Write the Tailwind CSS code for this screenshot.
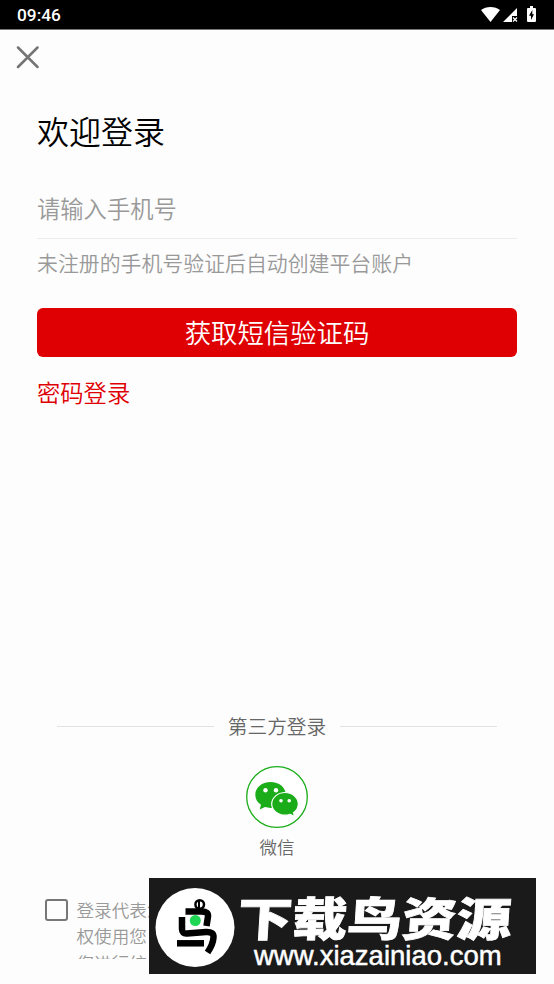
<!DOCTYPE html>
<html lang="zh-CN">
<head>
    <meta charset="UTF-8">
    <meta name="viewport" content="width=device-width, initial-scale=1.0">
    <title>欢迎登录</title>
    <script src="https://cdn.jsdelivr.net/npm/@tailwindcss/browser@4"></script>
</head>
<body class="bg-[#fdfdfd] font-['Noto_Sans_CJK_SC',sans-serif] font-[350] overflow-hidden">
    <div class="relative flex flex-col w-[554px] h-[984px] overflow-hidden">

        <!-- Status Bar -->
        <header class="flex justify-between h-[30px] pl-[17px] pr-[18px] bg-black border-b border-[#777] text-white shrink-0">
            <span class="font-['Roboto',sans-serif] font-medium text-[17.300px] leading-[31px]">09:46</span>
            <div class="flex pt-[6px]">
                <svg class="w-[20px] h-[17px]" viewBox="0 0 20 17" fill="#fff"><path d="M9.500 16 0 4Q4 1 9.500 1T19 4z"/></svg>
                <svg class="w-[15px] h-[17px] ml-[2px]" viewBox="0 0 15 17"><path d="M0 16 14 2v8H9v6z" fill="#fff"/><path d="m10 11.500 4 4m0-4-4 4" stroke="#fff" stroke-width="1.300"/></svg>
                <svg class="w-[9px] h-[17px] ml-[9px]" viewBox="0 0 9 17"><path d="M1 2h2V0h3v2h2q1 0 1 1v12q0 1-1 1H1q-1 0-1-1V3q0-1 1-1z" fill="#fff"/><path d="M5.300 4 2 9.700h2V14l3-5.700H5.300z" fill="#000"/></svg>
            </div>
        </header>

        <!-- Close Button -->
        <button class="mt-[16px] ml-[16px] w-[24px] h-[24px] shrink-0">
            <svg class="w-[24px] h-[24px]" viewBox="0 0 24 24" fill="none" stroke="#747474" stroke-width="2.500" stroke-linecap="round"><path d="m2 1.500 19.500 19.500M21.500 1.500 2 21"/></svg>
        </button>

        <!-- Login Form -->
        <main class="flex flex-col px-[37px]">
            <h1 class="mt-[37px] text-[32px] leading-[46px] font-[350] text-black">欢迎登录</h1>
            <div class="mt-[34px] h-[52px] pt-[4px] border-b border-[#ececec] text-[23.300px] leading-[34px] text-[#999]">请输入手机号</div>
            <p class="mt-[8px] text-[20.900px] leading-[30px] text-[#999]">未注册的手机号验证后自动创建平台账户</p>
            <button class="mt-[31px] h-[49px] rounded-md bg-[#df0003] text-white text-[26.400px] leading-[48px] pb-px font-[350]">获取短信验证码</button>
            <a href="#" class="mt-[18px] self-start text-[23.300px] leading-[34px] text-[#df0003]">密码登录</a>
        </main>

        <!-- Third-party Login -->
        <section class="mt-[302px] flex flex-col items-center">
            <div class="flex items-center w-full px-[57px] gap-[14px]">
                <span class="flex-1 h-px bg-[#e2e2e2]"></span>
                <h2 class="text-[19.700px] leading-[30px] font-[350] text-[#666]">第三方登录</h2>
                <span class="flex-1 h-px bg-[#e2e2e2]"></span>
            </div>
            <svg class="mt-[25px] w-[62px] h-[62px]" viewBox="0 0 62 62">
                <circle cx="31" cy="31" r="30.300" fill="#fff" stroke="#1aad19" stroke-width="1.300"/>
                <path d="M24.500 16C16 16 9.300 21.500 9.300 28.700c0 4.300 2 7.700 5.700 10.100l-1.300 4.700 5.300-2.400q3 .8 5.500.8C33 41.900 39.800 36 39.800 28.700S33 16 24.500 16z" fill="#1aad19"/>
                <path d="M39 26.500c7.200 0 13.300 5.100 13.300 11.500 0 3.500-1.800 6.600-4.800 8.700l1.200 3.900-4.600-2.300q-2.500.9-5.100.9C31.800 49.200 25.700 44.300 25.700 38S31.800 26.500 39 26.500z" fill="#1aad19" stroke="#fff" stroke-width="1.200"/>
                <g fill="#fff">
                    <circle cx="19.500" cy="24.200" r="2.200"/><circle cx="30" cy="24.200" r="2.200"/>
                    <circle cx="35" cy="34.700" r="1.800"/><circle cx="43.200" cy="34.700" r="1.800"/>
                </g>
            </svg>
            <span class="mt-[6px] text-[17.500px] leading-[26px] text-[#666]">微信</span>
        </section>

        <!-- Agreement -->
        <label class="mt-[36px] ml-[45px] flex h-[63px] overflow-hidden">
            <span class="mt-[3px] w-[23px] h-[22px] shrink-0 border-[2.500px] border-[#777] rounded-[3px]"></span>
            <span class="mt-px ml-[8.500px] text-[17.600px] leading-[26.400px] text-[#999] whitespace-nowrap">登录代表您<br>权使用您<br>您进行统</span>
        </label>

        <!-- Site Banner -->
        <aside class="absolute left-[149px] top-[878px] flex w-[387px] h-[96px] pl-[6px] bg-[#1a1a1a] text-white overflow-hidden">
            <svg class="mt-[9px] w-[80px] h-[80px] shrink-0" viewBox="0 0 80 80" fill="none">
                <circle cx="40" cy="40.500" r="39.500" fill="#fff"/>
                <circle cx="44.700" cy="17.500" r="4.300" stroke="#000" stroke-width="2.500"/>
                <path d="M44 13v9" stroke="#000" stroke-width="2"/>
                <path d="M30.500 24.500H47q6.500 0 6 5L51.500 39" stroke="#000" stroke-width="6.500"/>
                <path d="M27 30v12q0 5 5 4.500l19-1.500q8-.5 7.500 5.500-.5 7-6 15" stroke="#000" stroke-width="6.500"/>
                <path d="M22 56.300h27" stroke="#000" stroke-width="6.500"/>
                <circle cx="40.300" cy="33.500" r="5.500" fill="#1fd655"/>
            </svg>
            <div class="flex flex-col pl-[3px]">
                <strong class="mt-[14px] h-[50px] font-black text-[46px] leading-[48px] whitespace-nowrap origin-left scale-x-[1.190] -skew-x-3 [-webkit-text-stroke:0.800px_#fff]">下载鸟资源</strong>
                <span class="pl-[16px] font-['Liberation_Sans',sans-serif] font-normal text-[27.500px] leading-[28px] whitespace-nowrap [-webkit-text-stroke:0.500px_#fff]">www.xiazainiao.com</span>
            </div>
        </aside>
    </div>
</body>
</html>
